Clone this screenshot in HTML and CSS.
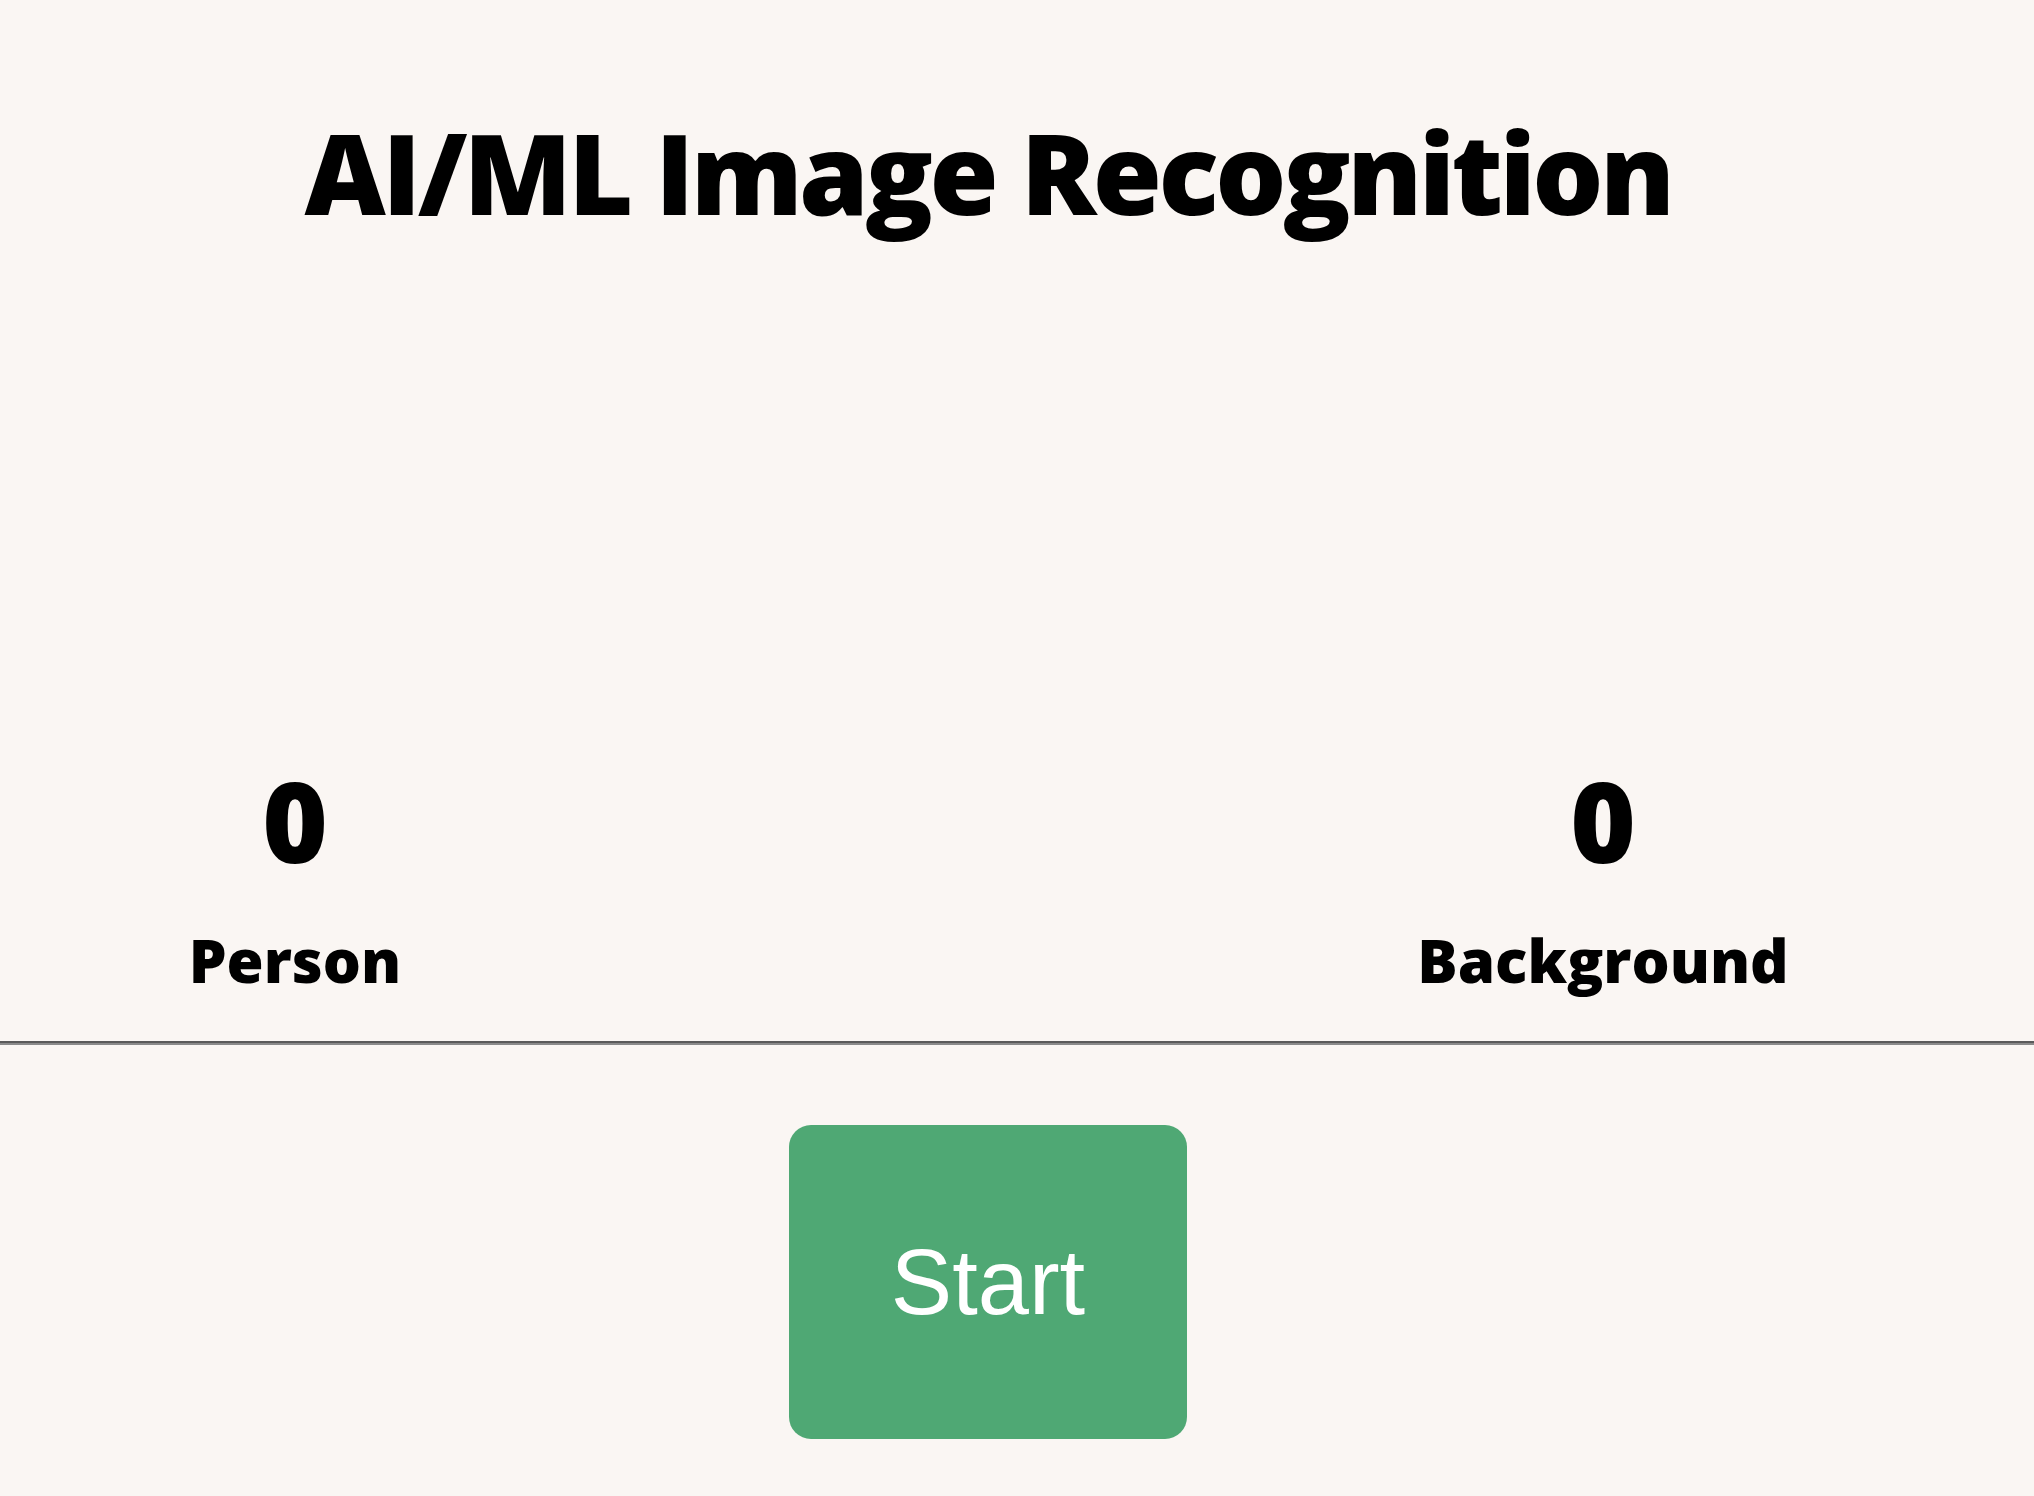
FILE: index.html
```html
<!DOCTYPE html>
<html lang="en">
<head>
<meta charset="utf-8">
<title>AI/ML Image Recognition</title>
<link rel="stylesheet" href="styles.css">
</head>
<body>
<main class="app">
  <h1 class="title">AI/ML Image Recognition</h1>
  <div class="stage"></div>
  <section class="counters">
    <div class="counter">
      <div class="count">0</div>
      <div class="label">Person</div>
    </div>
    <div class="counter">
      <div class="count">0</div>
      <div class="label">Background</div>
    </div>
  </section>
</main>
<hr class="divider">
<div class="controls">
  <button class="start" type="button">Start</button>
</div>
</body>
</html>
```

FILE: styles.css
```css
html, body {
  margin: 0;
  padding: 0;
  background: #faf6f3;
}

body {
  font-family: "Open Sans", "Noto Sans", sans-serif;
  color: #000;
  font-variant-ligatures: none;
}

.app {
  width: 1976px;
}

.title {
  margin: 0;
  padding-top: 107px;
  font-size: 112px;
  font-weight: 800;
  line-height: 130px;
  letter-spacing: -3.6px;
  text-align: center;
}

.stage {
  height: 523px;
}

.counters {
  display: flex;
  padding-left: 85px;
  gap: 888px;
}

.counter {
  width: 420px;
  display: flex;
  flex-direction: column;
  align-items: center;
}

.count {
  font-size: 112px;
  font-weight: 800;
  line-height: 120px;
}

.label {
  margin-top: 45px;
  font-size: 60px;
  font-weight: 800;
  line-height: 70px;
}

.divider {
  margin: 46px 0 0;
  height: 0;
  border: 0;
  border-top: 2px solid #5a5a5a;
  border-bottom: 2px solid #8a8a8a;
}

.controls {
  width: 1976px;
  display: flex;
  justify-content: center;
  padding-top: 80px;
}

.start {
  width: 398px;
  height: 314px;
  border: 0;
  border-radius: 22px;
  background: #4fa874;
  color: #fff;
  font-family: "Liberation Sans", Arial, sans-serif;
  font-size: 92px;
  font-weight: 400;
  padding: 0;
}
```
